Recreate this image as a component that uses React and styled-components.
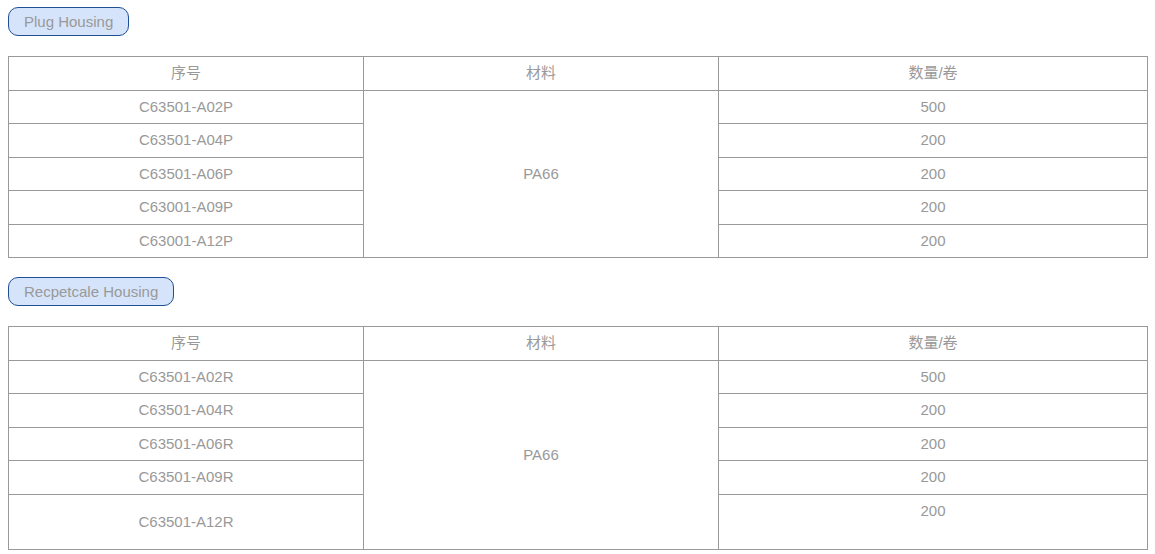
import React from 'react'
import styled, { createGlobalStyle } from 'styled-components'

const plug = [
  ['C63501-A02P', '500'],
  ['C63501-A04P', '200'],
  ['C63501-A06P', '200'],
  ['C63001-A09P', '200'],
  ['C63001-A12P', '200'],
]

const receptacle = [
  ['C63501-A02R', '500'],
  ['C63501-A04R', '200'],
  ['C63501-A06R', '200'],
  ['C63501-A09R', '200'],
  ['C63501-A12R', '200', true],
]

function SpecTable({ rows }) {
  return (
    <Table>
      <colgroup>
        <col style={{ width: 355 }} />
        <col style={{ width: 355 }} />
        <col />
      </colgroup>
      <thead>
        <tr>
          <Cell as="th">序号</Cell>
          <Cell as="th">材料</Cell>
          <Cell as="th">数量/卷</Cell>
        </tr>
      </thead>
      <tbody>
        {rows.map(([code, qty, tall], i) => (
          <tr key={code}>
            <Cell>{code}</Cell>
            {i === 0 ? <Cell rowSpan={rows.length}>PA66</Cell> : null}
            <Cell $top={tall}>
              {qty}
              {tall ? <Blank /> : null}
            </Cell>
          </tr>
        ))}
      </tbody>
    </Table>
  )
}

export default function App() {
  return (
    <>
      <GlobalStyle />
      <Page>
        <Tag>Plug Housing</Tag>
        <SpecTable rows={plug} />
        <Tag>Recpetcale Housing</Tag>
        <SpecTable rows={receptacle} />
      </Page>
    </>
  )
}

const GlobalStyle = createGlobalStyle`
  body {
    margin: 0;
    background: #fff;
    font-family: "Liberation Sans", Arial, "Noto Sans CJK SC", sans-serif;
  }
`

const Page = styled.div`
  display: flex;
  flex-direction: column;
  align-items: flex-start;
  gap: 20px;
  padding: 7px 8px;
`

const Tag = styled.div`
  height: 27px;
  line-height: 27px;
  padding: 0 15px;
  border: 1px solid #1f4f95;
  border-radius: 10px;
  background-color: #d5e4fa;
  color: #999;
  font-size: 15px;
`

const Table = styled.table`
  width: 1140px;
  margin-bottom: -1px;
  border-collapse: collapse;
  table-layout: fixed;
`

const Cell = styled.td`
  border: 1px solid #999;
  padding: 6px 0;
  line-height: 20.5px;
  text-align: center;
  vertical-align: ${(p) => (p.$top ? 'top' : 'middle')};
  color: #999;
  font-size: 15px;
  font-weight: normal;
`

const Blank = styled.span`
  display: block;
  height: 22px;
`
